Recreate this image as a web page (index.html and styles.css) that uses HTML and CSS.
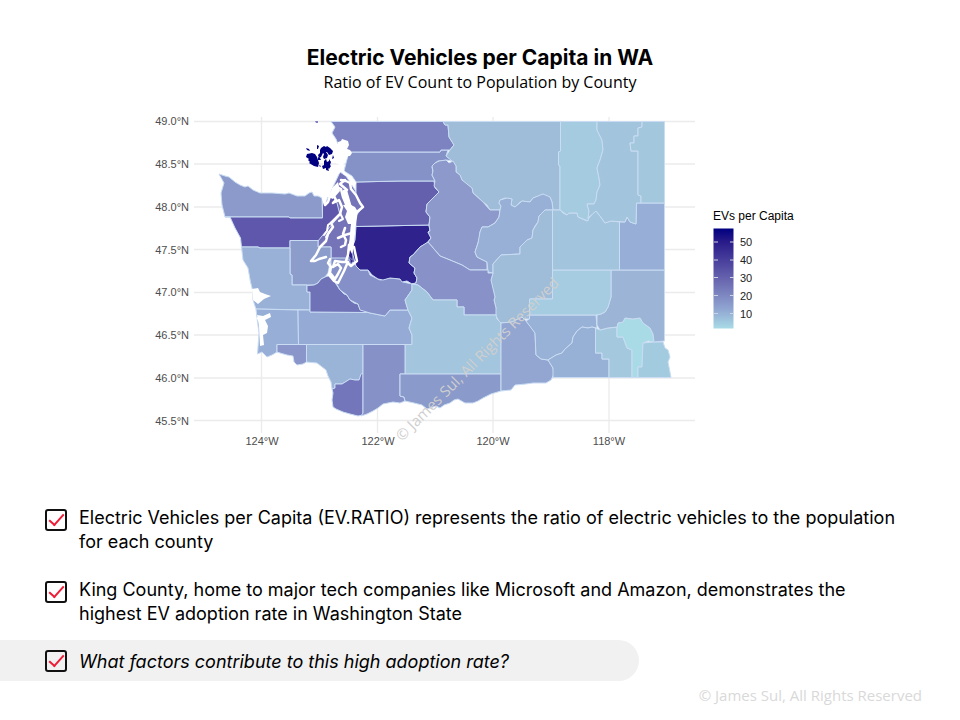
FILE: index.html
```
<!DOCTYPE html>
<html lang="en">
<head>
<meta charset="utf-8">
<title>Electric Vehicles per Capita in WA</title>
<link rel="stylesheet" href="styles.css">
</head>
<body>
<main class="slide">
  <header class="heading">
    <h1>Electric Vehicles per Capita in WA</h1>
    <p>Ratio of EV Count to Population by County</p>
  </header>

  <figure class="chart">
    <svg viewBox="144 108 672 346" role="img" aria-label="County map of electric vehicles per capita">
      <defs>
        <linearGradient id="scale" x1="0" y1="0" x2="0" y2="1">
          <stop offset="0" stop-color="#00007f"/>
          <stop offset="0.13" stop-color="#281a89"/>
          <stop offset="0.5" stop-color="#6763ae"/>
          <stop offset="0.8" stop-color="#8fa4d0"/>
          <stop offset="1" stop-color="#a9dbe6"/>
        </linearGradient>
      </defs>

      <g class="grid">
        <path d="M194 121.5H695M194 164H695M194 207H695M194 249.5H695M194 292.5H695M194 335H695M194 378H695M194 420.5H695"/>
        <path d="M261.5 117V433M377.5 117V433M493 117V433M609 117V433"/>
      </g>

      <g class="axis axis-y">
        <text x="189" y="125">49.0°N</text>
        <text x="189" y="168">48.5°N</text>
        <text x="189" y="211">48.0°N</text>
        <text x="189" y="254">47.5°N</text>
        <text x="189" y="296">47.0°N</text>
        <text x="189" y="339">46.5°N</text>
        <text x="189" y="382">46.0°N</text>
        <text x="189" y="425">45.5°N</text>
      </g>
      <g class="axis axis-x">
        <text x="262" y="445">124°W</text>
        <text x="378" y="445">122°W</text>
        <text x="493" y="445">120°W</text>
        <text x="609" y="445">118°W</text>
      </g>

      <g class="counties">
        <!-- Kitsap, Island -->
        <path fill="#7674b9" d="M322 216L333 187L340 172L346 176L355 190L363 207L356 226L357 265L350 268L343 260H331V247H318V241Z"/>
        <!-- Clallam -->
        <path fill="#8b9aca" d="M219 174L222 175L225 176L229 177L235 182L240 185L245 187L248 186L253 190L260 193L272 193L285 194L289 193L297 196H305L309 193L312 192L314 196L318 196L322 198L322.500 218H290L289 217H225L222 205L221 193L224 183Z"/>
        <!-- Jefferson -->
        <path fill="#5e57ab" d="M225 217H289L290 218H322.500V200L325 205L328 197L333 196L337 203L340 215L334 222L322 236L318 241L290 240.500V248H260L258 247H241.500L240.500 238L235 228L230 217Z"/>
        <!-- Mason -->
        <path fill="#8c9ccb" d="M290 240.500H318V247H331V258L328 273L325 277L321 279L318 283L314 285H292V275L290 274Z"/>
        <!-- Grays Harbor -->
        <path fill="#99b1d7" d="M241.500 247H258L260 248H290V274L292 275V285H307V292H310V310L256 309L253 300L252.500 290L250.500 282L248 268L243 260Z"/>
        <!-- Pacific -->
        <path fill="#97afd7" d="M256 309L298 310L298.500 344.500H277V352L272 355L267 357L262 352L257.500 354L259 333L257 318Z"/>
        <!-- Wahkiakum -->
        <path fill="#8a95ca" d="M277 344.500H306.500V362L303 364L297 365L294 362L293 356L287 355L280 353L277 352Z"/>
        <!-- Lewis -->
        <path fill="#95aad5" d="M298 310H310V312L368 312.500L385 316L390 310H408L412 318L409 328L412 335V344.500H298.500Z"/>
        <!-- Thurston -->
        <path fill="#7072b8" d="M307 285.500L314 285L318 283L321 279L325 277L331 275L336 284L340 290L344 294L347 295L350 300L354 303L358 304L360 309L368 312.500L310 312V292H307Z"/>
        <!-- Pierce -->
        <path fill="#8590c9" d="M331 258H347L355 264L360 270H368L370 275L380 280L390 278L400 279L403 282L412 284V290L405 300L408 310H390L385 316L370 313L360 310L358 304L350 300L347 295L340 290L331 274Z"/>
        <!-- King -->
        <path fill="#2f228c" d="M356 226.500L429 225L430 231L428 232L431 238L427 243L420 247L413 255L410 257L409 263L415 268L414 273L417 278L416 283L412 284L407 281L402 282L400 279L390 278L383 280L378 279L372 275L368 270L360 270L356 266L353 255L352 248L355 240Z"/>
        <!-- Snohomish -->
        <path fill="#6560ae" d="M356 182L400 181L434 181L435 188L439 192L437 196L431 200L430 203L427 204L426 212L430 217L429 225L356 226.500L355 217L363 207L356 195Z"/>
        <!-- Skagit -->
        <path fill="#8592c8" d="M349 152L440 152L441 150H448L446 156L453 161L446 160L444 161L438 161L434 164L432 167L433 172L432 175L435 181H400L356 182L352 176L344 171L346 163Z"/>
        <!-- Whatcom -->
        <path fill="#7d82c0" d="M331 121.500H443L445 125H448L449 137L454 145L450 150H441L440 152H350L345 148L338 144L336 139L332 133L335 127Z"/>
        <!-- Okanogan -->
        <path fill="#9fbdd9" d="M443 121.500H560.500V151L558.500 152V165L560 166V210H553L552 202L550 197H546L543 194L539 196L533 198L530 202L522 201L519 203L515 207L511 205L512 199H507L505 198L500 200L499 203L501 206L500 210H490L487 205L483 202L480 199L473 193L472 188L466 184L462 180L460 175L456 172V166L452 161L446 156L450 150L454 145L449 137L448 125H445Z"/>
        <!-- Chelan -->
        <path fill="#8c99ca" d="M435 163L439 161L446 160L449 163L453 161L456 166V172L460 175L462 180L472 188L473 193L483 202L490 210H500L499 217L495 223L488 227L482 227L480 232V236L478 243L475 252L477 257L483 260L487 262V270H470L462 265L450 260L440 256L428 242L431 238L428 232L430 231L429 225L430 217L426 212L427 204L431 200L439 192L434 186L435 181L432 175L433 171L432 166Z"/>
        <!-- Douglas -->
        <path fill="#98b0d6" d="M500 210L501 206L499 203L500 200L507 198L512 199L511 205L515 207L522 201L530 202L533 198L543 194L550 197L552 202L553 210H545L541 214L539 216L538 222L535 226L533 230L532 238L527 240L520 247V254L501 255L493 264V273L488 272L487 262L477 257L475 252L478 243L480 232L482 227L488 227L495 223L499 217Z"/>
        <!-- Grant -->
        <path fill="#9fbcd9" d="M545 210H552.500V299H530L529.500 319L524 319L522 317L512 322L500 323L496 316L495 311L496 308L494 300L495 297L492 287L491 280L493 273V264L501 255L520 254V247L527 240L532 238L533 230L538 222L539 216Z"/>
        <!-- Kittitas -->
        <path fill="#8892c8" d="M428 242L440 256L450 260L462 265L470 270H488V273H493L491 280L495 297L494 300L496 308V315H464V307H457V300H433L427 292L418 285L412 284L416 283L417 278L414 273L415 268L409 263L410 257L413 255L420 247Z"/>
        <!-- Yakima -->
        <path fill="#a3c5dd" d="M412 284L418 285L427 292L433 300H457V307H464V315H496L497 319L501 323V374H405V344.500H412V335L409 328L412 318L408 310L405 300L412 290Z"/>
        <!-- Cowlitz -->
        <path fill="#9ab4d7" d="M306.500 344.500H363V374L359 380H355L350 379L342 384L335 384V388L332 389L331 382L328 376L326 370L317 363L306.500 362Z"/>
        <!-- Clark -->
        <path fill="#7376ba" d="M363 373L361 374L359 380H355L350 379L342 384L335 384V388L332 389L333 393L332 400L333 407L336 409L343 412L350 414L358 416L363 415Z"/>
        <!-- Skamania -->
        <path fill="#8691c8" d="M363 344.500H405V374H400V396L404 397L405 401L400 403L393 402L383 404L378 408L373 411L367 414L361 416L363 413Z"/>
        <!-- Klickitat -->
        <path fill="#8a9aca" d="M400 374H501V391L491 394L483 398L478 401L473 403H465L458 399L454 400L450 403L444 405L440 408L436 406L427 409L422 405L414 403L405 401L404 397L400 396Z"/>
        <!-- Benton -->
        <path fill="#93a6d2" d="M501 323L512 322L522 317L526 321L531 327L535 333L536 355L541 359L548 360L553 368L554 374L551 380L546 383H533L526 384L515 385L511 390L501 391Z"/>
        <!-- Franklin -->
        <path fill="#98b1d6" d="M529.500 315H596L597 328L592 327L588 328L582 327L577 331L573 337L572 343L565 349L562 353L556 355L548 360L541 359L536 355L535 333L526 321L529.500 319Z"/>
        <!-- Walla Walla -->
        <path fill="#97b0d6" d="M548 360L556 355L562 353L565 349L572 343L573 337L577 331L582 327L588 328L592 327L595.500 328V353H602V359H609V377.500H553L553 368Z"/>
        <!-- Columbia -->
        <path fill="#a4c9de" d="M595.500 328L600 330L608 328L617 327V337H623L627 348L632 350V377.500H609V359H602V353H595.500Z"/>
        <!-- Garfield -->
        <path fill="#a9dbe6" d="M617 327L618 323L623 322L625 318L633 319L640 318L643 323L650 328L653 334L654 342L648 341L643 343L642 367H638V377.500H632V350L627 348L623 337H617Z"/>
        <!-- Asotin -->
        <path fill="#a2cbdf" d="M654 342H663L665 348L668 350L670 357L668 362L669 367L671 377.500H638V367H642L643 343Z"/>
        <!-- Whitman -->
        <path fill="#9cb5d7" d="M611 270H664.500V341L654 342L653 334L650 328L643 323L640 318L633 319L625 318L623 322L618 323L617 327L608 328L600 330L597 325V315L601 314L605 312L608 307L611 297Z"/>
        <!-- Adams -->
        <path fill="#a5cce0" d="M552.500 270H611V297L608 307L605 312L601 314L596 315H529.500V299H552.500Z"/>
        <!-- Lincoln -->
        <path fill="#a2c4dc" d="M552.500 210H560L563 213L567 215L569 213H577L578 217L587 221L592 214L596 211L600 216L605 223L611 221L619.500 222V270H552.500Z"/>
        <!-- Spokane -->
        <path fill="#97aed6" d="M619.500 222L625 222L627 217L630 222L636 224L636.500 203H664.500V270H619.500Z"/>
        <!-- Ferry -->
        <path fill="#a5cbe0" d="M560.500 121.500H597V130L602 140L603 150L600 160L597 168L599 178L600 185L597 192L596 200L594 204L587 204L589 211L588 221L578 217L577 213H569L567 215L560 210V166L558.500 165V152L560.500 151Z"/>
        <!-- Stevens -->
        <path fill="#a2c4dc" d="M597 121.500H642V127L638 128V136H634V143H630L631 151H638V195L641 196V203H636.500L636 224L630 222L627 217L625 222L611 221L605 223L600 216L596 211L588 218L589 211L587 204L594 204L596 200L597 192L600 185L599 178L597 168L600 160L603 150L602 140L597 130Z"/>
        <!-- Pend Oreille -->
        <path fill="#a3c8de" d="M642 121.500H664.500V203H641V196L638 195V151H631L630 143H634V136H638V128L642 127Z"/>
      </g>

      <!-- San Juan islands -->
      <g fill="#000080">
        <path d="M306 148l3 1 1 2-3-1zM307 154l5-1 3 1 2 3 1 3 1 3-1 4-4-1-5-3 1-1-2-2 1-1-3-2zM317 145l2 1-1 3-1 0z"/>
        <path d="M320 150l1-2 3-2 2 1 1-1 3 2 3 3-1 3-3 1-2-3-1 0 2 3-1 3-3 1-1-2 1-3-1-1-2 4-2 1-1-3 2-2z"/>
        <path d="M324 161l2-2 1 3 2-1 0-2 2 3-1 3 1 1-2 3-1-1 1 3-3-1 0-2-3 1-1-3 2-1zM318 157l2 1 1 2-3 0zM333 155l1 3-2 1zM319 165l2 1-1 1z"/>
        <path d="M315 121h3v2h-2z" fill="#7d82c0"/>
      </g>

      <!-- Puget Sound, Hood Canal and coastal bays -->
      <g class="water">
        <path d="M338 142l3-1 1-2 6 2 1 4-2 4 3 1 2 3-2 3-2 0-2 4-5 2-4 2-3-4 2-8z"/>
        <path d="M252 289l6-1 2 4 5 2 6 2-7 3-6 5-5-4zM257 315l6 1 7-3 1 4-6 3 3 6-1 7-4 2 1 10-4 1-1-20z"/>
        <path d="M256 318l5-2 1 4-3 1zM333 187l-5 10 5 2 7-8-2-9z"/>
        <path d="M343 205l6-1 6 3 3 5-3 6-1 6-6 0-3-7 2-6z"/>
      </g>
      <g class="channel">
        <path class="wide" d="M342 160L340 168L337 172M345 192L349 206L355 214L353 228L352 240L350 252"/>
        <path class="mid" d="M339 171L342 170L345 174L350 177L355 183L352 184L346 181L341 180M333 189L337 187L341 189L343 197L346 204M350 183L351 189L356 195L360 203L363 207L358 211L352 218M345 180L340 184L347 190"/>
        <path class="mid" d="M323 198L325 205L328 202L330 196L334 196L336 200L333 203L339 200L342 207L340 214L335 219L331 223L333 227L328 234L326 241L320 247L316 255L311 261L315 261L319 259L326 257"/>
        <path d="M332 222L328 225L327 231L324 235M330 231L326 237M340 213L343 219L339 221"/>
        <path class="mid" d="M352 233L345 235L338 238M345 228L343 234L346 240L345 245L341 247M349 245L348 255L346 261L351 266L357 261L355 252L354 247M348 262L342 262L335 261L333 267L338 264L341 268L338 274L335 279L331 274M330 259L328 263L331 267L329 275L334 281L338 283L341 277L344 271L347 264"/>
      </g>
      <path fill="#2f228c" d="M350 250l2 4v5l-3-3zM350 259l3 2-2 2z"/>

      <text class="watermark" transform="translate(402 442) rotate(-45)">© James Sul, All Rights Reserved</text>

      <g class="legend">
        <text class="legend-title" x="713" y="220">EVs per Capita</text>
        <rect x="713.500" y="228.500" width="20" height="100" fill="url(#scale)"/>
        <path d="M714 242H718M730 242H734M714 260H718M730 260H734M714 277.500H718M730 277.500H734M714 295.500H718M730 295.500H734M714 313.500H718M730 313.500H734"/>
        <text x="740" y="246">50</text>
        <text x="740" y="264">40</text>
        <text x="740" y="282">30</text>
        <text x="740" y="300">20</text>
        <text x="740" y="318">10</text>
      </g>
    </svg>
  </figure>

  <ul class="notes">
    <li class="note">
      <input type="checkbox" id="note-ratio" checked>
      <label for="note-ratio">Electric Vehicles per Capita (EV.RATIO) represents the ratio of electric vehicles to the population for each county</label>
    </li>
    <li class="note">
      <input type="checkbox" id="note-king" checked>
      <label for="note-king">King County, home to major tech companies like Microsoft and Amazon, demonstrates the highest EV adoption rate in Washington State</label>
    </li>
    <li class="note question">
      <input type="checkbox" id="note-factors" checked>
      <label for="note-factors">What factors contribute to this high adoption rate?</label>
    </li>
  </ul>

  <footer class="copyright">© James Sul, All Rights Reserved</footer>
</main>
</body>
</html>
```
FILE: styles.css
```
* {
  box-sizing: border-box;
}

body {
  margin: 0;
  background: #fff;
  color: #000;
  font-family: Inter, "Liberation Sans", sans-serif;
}

.slide {
  padding-top: 44px;
}

.heading {
  text-align: center;
}

.heading h1 {
  margin: 0;
  font-size: 21px;
  line-height: 28px;
  font-weight: 700;
}

.heading p {
  margin: 0;
  font-family: "Open Sans", "Noto Sans", sans-serif;
  font-size: 16px;
  line-height: 20px;
}

.chart {
  width: 70%;
  margin: 16px auto 0;
}

.chart svg {
  display: block;
  width: 100%;
  height: auto;
}

.grid path {
  fill: none;
  stroke: #ebebeb;
  stroke-width: 1.3;
}

.axis,
.legend {
  font-family: "Liberation Sans", Arial, sans-serif;
  font-size: 11px;
}

.axis {
  fill: #4d4d4d;
}

.axis-y {
  text-anchor: end;
}

.axis-x {
  text-anchor: middle;
}

.counties path {
  stroke: #c9dcf3;
  stroke-width: 1;
  stroke-linejoin: round;
}

.water path {
  fill: #fff;
}

.channel path {
  fill: none;
  stroke: #fff;
  stroke-width: 2;
  stroke-linejoin: round;
  stroke-linecap: round;
}

.channel .mid {
  stroke-width: 2.5;
}

.channel .wide {
  stroke-width: 5;
}

.watermark {
  fill: #cfcfcf;
  font-family: "Open Sans", "Noto Sans", sans-serif;
  font-size: 15px;
}

.legend {
  fill: #222;
}

.legend-title {
  fill: #000;
  font-size: 12px;
}

.legend path {
  stroke: #cfd3ea;
  stroke-width: 1;
}

.notes {
  display: flex;
  flex-direction: column;
  gap: 24px;
  margin: 52px 0 0;
  padding: 0;
  list-style: none;
}

.note {
  display: flex;
  align-items: flex-start;
  gap: 12px;
  padding: 0 56px 0 45px;
  font-size: 18px;
  line-height: 24px;
}

.note input {
  appearance: none;
  display: grid;
  flex: none;
  place-items: center;
  width: 22px;
  height: 22px;
  margin: 3px 0 0;
  border: 2px solid #111;
  border-radius: 3px;
  background: #fff;
}

.note input:checked::before {
  content: "";
  width: 13px;
  height: 6px;
  margin-bottom: 4px;
  border: solid #ee1c36;
  border-width: 0 0 2px 2px;
  transform: rotate(-48deg);
}

.question {
  width: 639px;
  max-width: 100%;
  margin-top: -10px;
  padding-top: 10px;
  padding-bottom: 7px;
  border-radius: 0 21px 21px 0;
  background: #f1f1f1;
  font-style: italic;
}

.question input {
  margin-top: 0;
  background: transparent;
}

.copyright {
  padding: 4px 38px 0 0;
  color: #d9d9d9;
  font-family: "Open Sans", "Noto Sans", sans-serif;
  font-size: 15px;
  line-height: 20px;
  text-align: right;
}
```
